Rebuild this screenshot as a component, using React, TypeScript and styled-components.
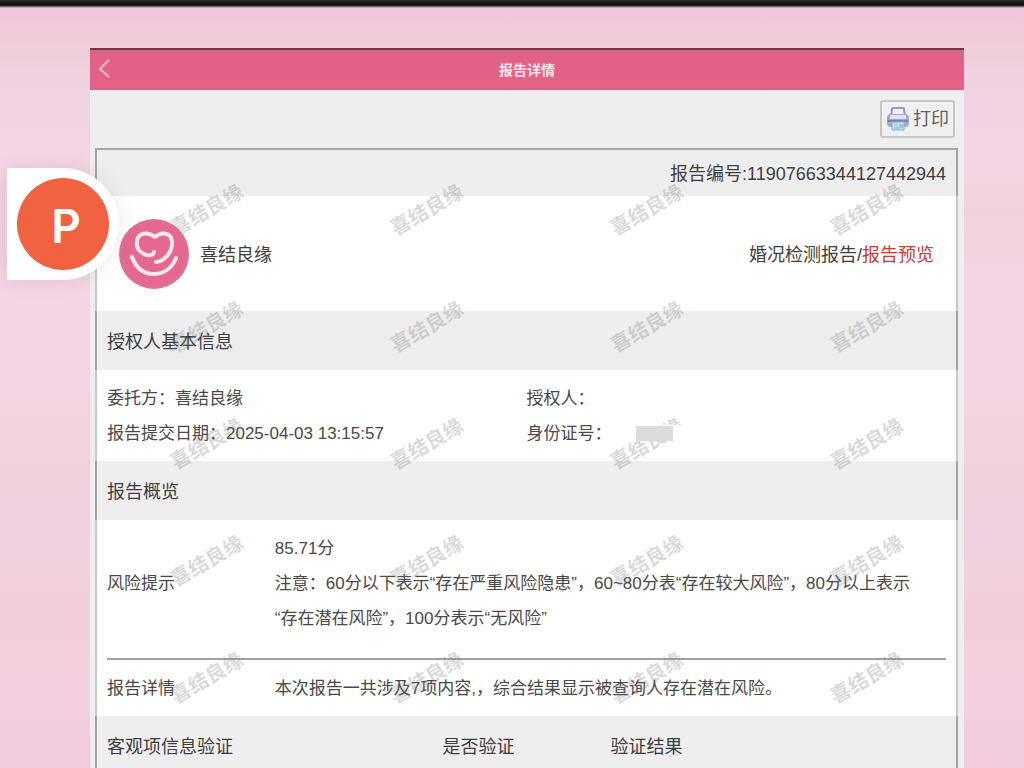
import React from "react";
import styled, { createGlobalStyle } from "styled-components";

const GlobalStyle = createGlobalStyle`
  *, *::before, *::after { box-sizing: border-box; }
  body {
    margin: 0;
    color: #484848;
    font: 17px/35px "Liberation Sans", "Noto Sans CJK SC", sans-serif;
  }
`;

const Page = styled.div`
  position: relative;
  display: flex;
  flex-direction: column;
  min-height: 100vh;
  background: linear-gradient(
    #f4c4da 8px, #efcedb 50px, #efd3e2 90px, #f3d5e4 160px, #f0d1dd 210px,
    #f3d5e4 300px, #f3d4e2 390px, #f0d1dc 470px, #f1d1e1 530px,
    #f0cfd9 620px, #f2cfdf 690px, #f3cbdc 768px
  );
`;

const StatusStrip = styled.div`
  height: 8px;
  background: linear-gradient(#262b2b, #080a0a 5px, #8f8289 7px, #e9c3d3);
`;

const Screen = styled.main`
  flex: 1;
  display: flex;
  flex-direction: column;
  margin: 40px 60px 0 90px;
  background: #eeeeee;
`;

const TitleBar = styled.header`
  display: grid;
  grid-template-columns: 40px 1fr 40px;
  align-items: center;
  height: 42px;
  border-top: 2px solid #7d3148;
  border-bottom: 1px solid #cb6787;
  background: linear-gradient(#cf6a88, #e36088 7px, #e46187);
`;

const BackButton = styled.button`
  display: flex;
  width: 40px;
  height: 36px;
  padding: 6px 0 0 8px;
  border: 0;
  background: none;
  color: #fbb9cf;
`;

const Title = styled.h1`
  margin: 0;
  font-size: 14px;
  line-height: 38px;
  text-align: center;
  color: #ffe6ee;
`;

const Toolbar = styled.div`
  display: flex;
  justify-content: flex-end;
  align-items: center;
  height: 58px;
  padding: 0 9px;
`;

const PrintButton = styled.button`
  display: flex;
  align-items: center;
  justify-content: space-between;
  width: 75px;
  height: 38px;
  padding: 0 4px;
  border: 2px solid #c6c6c6;
  border-radius: 3px;
  background: #f0f0f0;
  color: #626262;
  font: inherit;
  font-size: 18px;
`;

const Report = styled.article`
  position: relative;
  flex: 1;
  display: flex;
  flex-direction: column;
  margin: 0 6px 0 5px;
  border-top: 2px solid #a5a7a6;
`;

const Band = styled.section<{ $tone: "grey" | "white"; $height?: number; $grow?: boolean }>`
  display: flex;
  flex-direction: column;
  justify-content: ${(p) => (p.$grow ? "flex-start" : "center")};
  flex: ${(p) => (p.$grow ? "1 0 auto" : "none")};
  min-height: ${(p) => (p.$height ? `${p.$height}px` : "auto")};
  padding: 0 10px;
  border: solid ${(p) => (p.$tone === "grey" ? "#a3a3a3" : "#c9c9c9")};
  border-width: 0 2px;
  background: ${(p) => (p.$tone === "grey" ? "#eeeeee" : "#ffffff")};
`;

const ReportNumber = styled.p`
  margin: 0;
  padding-top: 2px;
  font-size: 18px;
  text-align: right;
  color: #3e3e3e;
`;

const BrandRow = styled.div`
  display: flex;
  align-items: center;
  gap: 11px;
  padding: 0 12px;
  font-size: 18px;
  color: #3e3e3e;
`;

const LogoMark = styled.svg`
  position: relative;
  z-index: 2;
  flex: none;
`;

const BrandName = styled.span`
  padding-top: 4px;
`;

const Breadcrumb = styled.span`
  margin-left: auto;
  padding-top: 4px;
`;

const Current = styled.span`
  color: #c93a36;
`;

const SectionTitle = styled.h2`
  margin: 0;
  padding-top: 4px;
  font-size: 18px;
  font-weight: 400;
  color: #3e3e3e;
`;

const InfoGrid = styled.dl`
  display: grid;
  grid-template-columns: 1fr 1fr;
  margin: 0;
`;

const InfoItem = styled.div`
  display: flex;
  align-items: center;
`;

const Term = styled.dt`
  white-space: nowrap;
`;

const Value = styled.dd`
  margin: 0;
`;

const Redacted = styled.span`
  position: relative;
  z-index: 2;
  display: flex;
  padding: 1px 34px 0 24px;
  background: #ffffff;

  &::before {
    content: "";
    width: 37px;
    height: 15px;
    background: #dcdcdc;
  }
`;

const Overview = styled.dl`
  margin: 0;
`;

const OverviewRow = styled.div<{ $ruled?: boolean }>`
  display: grid;
  grid-template-columns: 1fr 4fr;
  align-items: center;
  padding: ${(p) => (p.$ruled ? "11px 0 22px" : "11px 0 10px")};
  border-bottom: ${(p) => (p.$ruled ? "2px solid #a0a0a0" : "0")};
`;

const Detail = styled.dd`
  margin: 0;
  padding-right: 20px;
`;

const Line = styled.p`
  margin: 0;
`;

const CheckTable = styled.table`
  width: 100%;
  margin-top: 14px;
  table-layout: fixed;
  border-collapse: collapse;
`;

const HeadCell = styled.th<{ $share: number }>`
  width: ${(p) => p.$share}%;
  padding: 0;
  font-size: 18px;
  font-weight: 400;
  text-align: left;
  color: #3e3e3e;
`;

const Watermarks = styled.div`
  position: absolute;
  inset: 0;
  z-index: 1;
  display: grid;
  grid-template-columns: repeat(4, 220px);
  grid-auto-rows: 117px;
  padding: 1px 0 0 2px;
  overflow: hidden;
  pointer-events: none;
`;

const Watermark = styled.span`
  place-self: center;
  font-size: 20px;
  font-weight: 700;
  line-height: 20px;
  color: rgba(120, 120, 120, 0.28);
  transform: rotate(-30deg);
`;

const FloatingBadge = styled.div`
  position: absolute;
  top: 168px;
  left: 7px;
  z-index: 3;
  padding: 10px;
  border-radius: 0 56px 56px 0;
  background: #ffffff;
  box-shadow: 0 0 20px rgba(120, 60, 90, 0.12);
`;

const BadgeDisc = styled.div`
  display: flex;
  align-items: center;
  justify-content: center;
  width: 92px;
  height: 92px;
  padding: 4px 0 0 6px;
  border-radius: 50%;
  background: #f16340;
  color: #ffffff;
  font: 600 46px/88px Inter, sans-serif;
`;

function ChevronLeft() {
  return (
    <svg width="18" height="22" viewBox="0 0 18 22" fill="none" stroke="currentColor" strokeWidth="2" aria-hidden="true">
      <path d="M11 2 L2 11 L11 19" />
    </svg>
  );
}

function PrinterIcon() {
  return (
    <svg width="24" height="26" viewBox="0 0 24 26" fill="none" aria-hidden="true">
      <path d="M5 10 L6 3 Q6 2 7 2 H17 Q18 2 18 3 L19 10" fill="#f1effa" stroke="#9a98bd" strokeWidth="2" />
      <rect x="1" y="8" width="22" height="13" rx="4" fill="#a6a6cb" />
      <rect x="4" y="9" width="16" height="4" fill="#e6e2f6" />
      <path d="M2 15 H22" stroke="#7d81ad" strokeWidth="2" />
      <path d="M6 16 H18 L18 24 H6 Z" fill="#bfe3f1" stroke="#80b4d0" strokeWidth="1" />
      <path d="M8 19 H12 M8 22 H13" stroke="#7ab5d3" strokeWidth="1" />
      <rect x="13" y="18" width="4" height="4" fill="#8ccbe0" />
    </svg>
  );
}

function HeartLogo() {
  return (
    <LogoMark width="70" height="70" viewBox="0 0 70 70" fill="none" role="img" aria-label="喜结良缘">
      <circle cx="35" cy="35" r="35" fill="#df6f92" />
      <circle cx="35" cy="35" r="31" fill="#e4688f" />
      <g stroke="#ffe6ef" strokeWidth="4" strokeLinecap="round" strokeLinejoin="round">
        <path d="M35 33 C34 37 29 37 25 35 C19 32 17 28 18 22 C19 14 28 12 36 18 C43 12 52 14 53 22 C54 33 46 42 37 43" />
        <path d="M13 38 C17 49 25 55 35 55 C45 55 53 49 57 39" />
      </g>
    </LogoMark>
  );
}

const watermarkKeys = Array.from({ length: 20 }, (_, i) => i);

export default function App() {
  return (
    <Page>
      <GlobalStyle />
      <StatusStrip />
      <Screen>
        <TitleBar>
          <BackButton type="button" aria-label="返回">
            <ChevronLeft />
          </BackButton>
          <Title>报告详情</Title>
        </TitleBar>
        <Toolbar>
          <PrintButton type="button">
            <PrinterIcon />
            打印
          </PrintButton>
        </Toolbar>
        <Report>
          <Band $tone="grey" $height={46}>
            <ReportNumber>报告编号:11907663344127442944</ReportNumber>
          </Band>
          <Band $tone="white" $height={115}>
            <BrandRow>
              <HeartLogo />
              <BrandName>喜结良缘</BrandName>
              <Breadcrumb>
                婚况检测报告/<Current>报告预览</Current>
              </Breadcrumb>
            </BrandRow>
          </Band>
          <Band $tone="grey" $height={59}>
            <SectionTitle>授权人基本信息</SectionTitle>
          </Band>
          <Band $tone="white" $height={91}>
            <InfoGrid>
              <InfoItem>
                <Term>委托方：</Term>
                <Value>喜结良缘</Value>
              </InfoItem>
              <InfoItem>
                <Term>授权人：</Term>
                <Value />
              </InfoItem>
              <InfoItem>
                <Term>报告提交日期：</Term>
                <Value>2025-04-03 13:15:57</Value>
              </InfoItem>
              <InfoItem>
                <Term>身份证号：</Term>
                <Value>
                  <Redacted />
                </Value>
              </InfoItem>
            </InfoGrid>
          </Band>
          <Band $tone="grey" $height={59}>
            <SectionTitle>报告概览</SectionTitle>
          </Band>
          <Band $tone="white">
            <Overview>
              <OverviewRow $ruled>
                <Term>风险提示</Term>
                <Detail>
                  <Line>85.71分</Line>
                  <Line>
                    注意：60分以下表示“存在严重风险隐患”，60~80分表“存在较大风险”，80分以上表示
                    <wbr />
                    “存在潜在风险”，100分表示“无风险”
                  </Line>
                </Detail>
              </OverviewRow>
              <OverviewRow>
                <Term>报告详情</Term>
                <Detail>本次报告一共涉及7项内容,，综合结果显示被查询人存在潜在风险。</Detail>
              </OverviewRow>
            </Overview>
          </Band>
          <Band $tone="grey" $grow>
            <CheckTable>
              <thead>
                <tr>
                  <HeadCell scope="col" $share={40}>客观项信息验证</HeadCell>
                  <HeadCell scope="col" $share={20}>是否验证</HeadCell>
                  <HeadCell scope="col" $share={40}>验证结果</HeadCell>
                </tr>
              </thead>
            </CheckTable>
          </Band>
          <Watermarks aria-hidden="true">
            {watermarkKeys.map((key) => (
              <Watermark key={key}>喜结良缘</Watermark>
            ))}
          </Watermarks>
        </Report>
      </Screen>
      <FloatingBadge>
        <BadgeDisc>P</BadgeDisc>
      </FloatingBadge>
    </Page>
  );
}
